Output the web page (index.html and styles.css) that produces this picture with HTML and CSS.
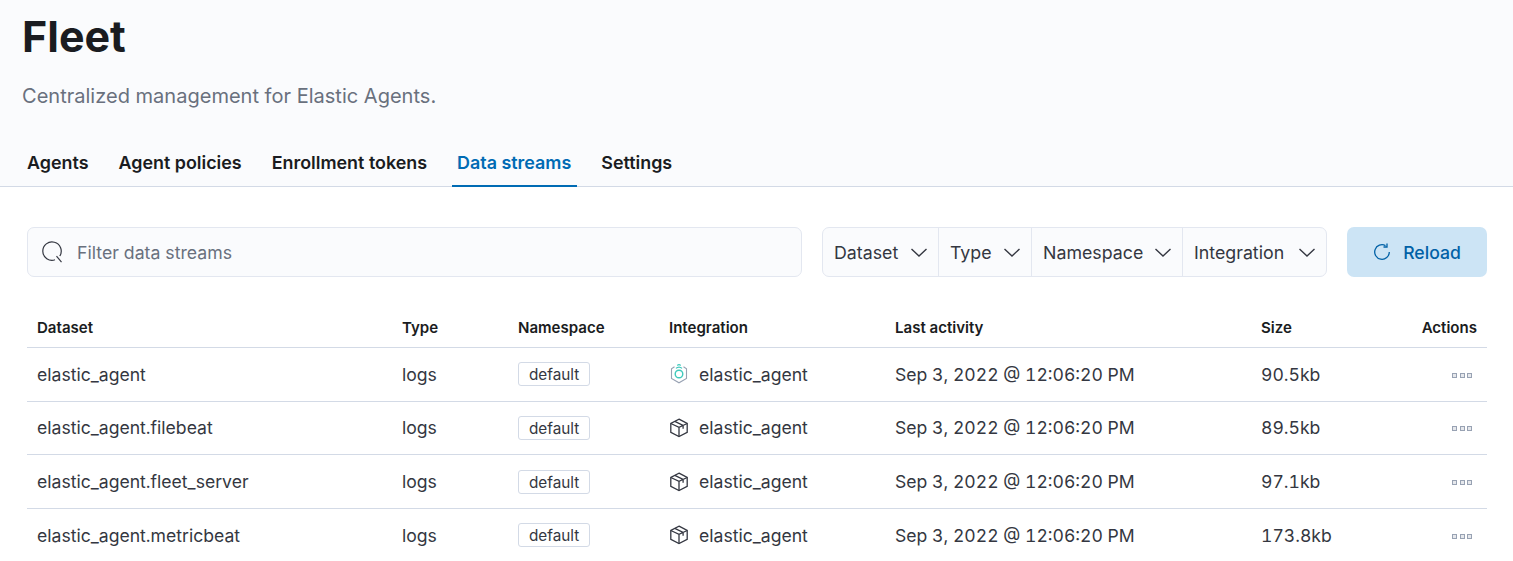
FILE: index.html
```html
<!DOCTYPE html>
<html lang="en">

<head>
    <meta charset="UTF-8">
    <title>Fleet - Data streams</title>
    <link rel="stylesheet" href="styles.css">
</head>

<body>

    <header class="page-header">
        <h1>Fleet</h1>
        <p class="subtitle">Centralized management for Elastic Agents.</p>
        <nav class="tabs">
            <a class="tab">Agents</a>
            <a class="tab">Agent policies</a>
            <a class="tab">Enrollment tokens</a>
            <a class="tab tab-active">Data streams</a>
            <a class="tab">Settings</a>
        </nav>
    </header>

    <main class="content">
        <div class="toolbar">
            <div class="search">
                <svg class="search-icon" width="22" height="22" viewBox="0 0 22 22" fill="none" stroke="#343741" stroke-width="1.2">
                    <path d="M13 18.800A9.200 9.200 0 1 1 17.800 15"/>
                    <path d="M14.500 15.200l5 6"/>
                </svg>
                <span class="search-text">Filter data streams</span>
            </div>
            <div class="filters">
                <button class="filter">Dataset <svg class="chevron" width="16" height="9" viewBox="0 0 16 9" fill="none" stroke="#343741" stroke-width="1.4"><path d="M.5 1L8 8l7.500-7"/></svg></button>
                <button class="filter">Type <svg class="chevron" width="16" height="9" viewBox="0 0 16 9" fill="none" stroke="#343741" stroke-width="1.4"><path d="M.5 1L8 8l7.500-7"/></svg></button>
                <button class="filter">Namespace <svg class="chevron" width="16" height="9" viewBox="0 0 16 9" fill="none" stroke="#343741" stroke-width="1.4"><path d="M.5 1L8 8l7.500-7"/></svg></button>
                <button class="filter">Integration <svg class="chevron" width="16" height="9" viewBox="0 0 16 9" fill="none" stroke="#343741" stroke-width="1.4"><path d="M.5 1L8 8l7.500-7"/></svg></button>
            </div>
            <button class="reload">
                <svg width="18" height="18" viewBox="0 0 18 18" fill="none" stroke="#0061a6" stroke-width="1.3">
                    <path d="M12.500 2.600A7.300 7.300 0 1 0 16.300 9"/>
                    <path d="M14 .5v3.500h-3.500"/>
                </svg>
                Reload
            </button>
        </div>

        <table class="streams">
            <thead>
                <tr>
                    <th class="col-dataset">Dataset</th>
                    <th class="col-type">Type</th>
                    <th class="col-ns">Namespace</th>
                    <th class="col-int">Integration</th>
                    <th class="col-last">Last activity</th>
                    <th class="col-size">Size</th>
                    <th class="col-actions">Actions</th>
                </tr>
            </thead>
            <tbody>
                <tr>
                    <td>elastic_agent</td>
                    <td>logs</td>
                    <td><span class="badge">default</span></td>
                    <td><span class="integration">
                        <svg width="20" height="20" viewBox="0 0 20 20" fill="none">
                            <path d="M5.500 2.800L2.500 4.800v9.700l7.500 4.300 7.500-4.300V4.800l-3-2" stroke="#98a2b3" stroke-width="1.100"/>
                            <circle cx="10" cy="10" r="3.800" stroke="#3fc9bd" stroke-width="1.400"/>
                            <path d="M7 4.400a4 4 0 0 1 6 0M8.300 1.500a2.500 2.500 0 0 1 3.400 0" stroke="#3fc9bd" stroke-width="1.200"/>
                        </svg>
                        elastic_agent</span></td>
                    <td>Sep 3, 2022 @ 12:06:20 PM</td>
                    <td>90.5kb</td>
                    <td><span class="dots"><i></i><i></i><i></i></span></td>
                </tr>
                <tr>
                    <td>elastic_agent.filebeat</td>
                    <td>logs</td>
                    <td><span class="badge">default</span></td>
                    <td><span class="integration">
                        <svg width="20" height="20" viewBox="0 0 20 20" fill="none" stroke="#343741" stroke-width="1.300">
                            <path d="M10 1.200l8.200 4.300v8.800L10 18.600l-8.200-4.300V5.500z"/>
                            <path d="M1.800 5.500l8.200 3.900 8.200-3.900M10 9.400v9.200M5.800 3.400l8.300 4.100v3.200"/>
                        </svg>
                        elastic_agent</span></td>
                    <td>Sep 3, 2022 @ 12:06:20 PM</td>
                    <td>89.5kb</td>
                    <td><span class="dots"><i></i><i></i><i></i></span></td>
                </tr>
                <tr>
                    <td>elastic_agent.fleet_server</td>
                    <td>logs</td>
                    <td><span class="badge">default</span></td>
                    <td><span class="integration">
                        <svg width="20" height="20" viewBox="0 0 20 20" fill="none" stroke="#343741" stroke-width="1.300">
                            <path d="M10 1.200l8.200 4.300v8.800L10 18.600l-8.200-4.300V5.500z"/>
                            <path d="M1.800 5.500l8.200 3.900 8.200-3.900M10 9.400v9.200M5.800 3.400l8.300 4.100v3.200"/>
                        </svg>
                        elastic_agent</span></td>
                    <td>Sep 3, 2022 @ 12:06:20 PM</td>
                    <td>97.1kb</td>
                    <td><span class="dots"><i></i><i></i><i></i></span></td>
                </tr>
                <tr>
                    <td>elastic_agent.metricbeat</td>
                    <td>logs</td>
                    <td><span class="badge">default</span></td>
                    <td><span class="integration">
                        <svg width="20" height="20" viewBox="0 0 20 20" fill="none" stroke="#343741" stroke-width="1.300">
                            <path d="M10 1.200l8.200 4.300v8.800L10 18.600l-8.200-4.300V5.500z"/>
                            <path d="M1.800 5.500l8.200 3.900 8.200-3.900M10 9.400v9.200M5.800 3.400l8.300 4.100v3.200"/>
                        </svg>
                        elastic_agent</span></td>
                    <td>Sep 3, 2022 @ 12:06:20 PM</td>
                    <td>173.8kb</td>
                    <td><span class="dots"><i></i><i></i><i></i></span></td>
                </tr>
            </tbody>
        </table>
    </main>

</body>

</html>
```

FILE: styles.css
```css
html, body {
    height: 561px;
    overflow: hidden;
}

body {
    font-family: Inter, "Liberation Sans", sans-serif;
    font-size: 17.6px;
    color: #343741;
    background-color: #fff;
    margin: 0;
}

.page-header {
    background-color: #fafbfd;
    border-bottom: 1px solid #d3dae6;
    height: 186px;
    padding: 0 22px;
}

h1 {
    margin: 0;
    padding-top: 10px;
    font-size: 43px;
    line-height: 52px;
    font-weight: 700;
    color: #1a1c21;
}

.subtitle {
    margin: 21px 0 0;
    font-size: 20.05px;
    line-height: 26px;
    color: #69707d;
}

.tabs {
    display: flex;
    margin: 29px 0 0 -.5px;
}

.tab {
    padding: 0 5.5px;
    margin-right: 19px;
    height: 49px;
    line-height: 50px;
    font-size: 17.9px;
    font-weight: 600;
    color: #1a1c21;
    box-sizing: border-box;
}

.tab-active {
    color: #006bb4;
    border-bottom: 2px solid #006bb4;
}

.content {
    padding: 40px 26px 0 27px;
}

.toolbar {
    display: flex;
    gap: 20px;
}

.search {
    flex: 1;
    display: flex;
    align-items: center;
    height: 50px;
    padding-left: 14px;
    gap: 13px;
    background-color: #fafbfd;
    border: 1px solid #e3e7f0;
    border-radius: 7px;
    box-sizing: border-box;
}

.search-text {
    font-size: 17.7px;
    color: #69707d;
}

.filters {
    display: flex;
    width: 505px;
    height: 50px;
    background-color: #fafbfd;
    border: 1px solid #e3e7f0;
    border-radius: 7px;
    box-sizing: border-box;
}

.filter {
    display: flex;
    align-items: center;
    justify-content: space-between;
    flex: none;
    padding: 0 11px;
    background: none;
    border: none;
    border-left: 1px solid #e3e7f0;
    font-family: inherit;
    font-size: 17.8px;
    color: #343741;
}

.filter:nth-child(1) { width: 115px; border-left: none; }
.filter:nth-child(2) { width: 93px; }
.filter:nth-child(3) { width: 151px; }
.filter:nth-child(4) { width: 144px; }

.reload {
    display: flex;
    align-items: center;
    justify-content: center;
    gap: 12px;
    width: 140px;
    height: 50px;
    background-color: #cce4f5;
    border: none;
    border-radius: 7px;
    font-family: inherit;
    font-size: 17.6px;
    font-weight: 500;
    color: #0061a6;
}

.streams {
    width: 100%;
    margin-top: 30px;
    border-collapse: collapse;
    table-layout: fixed;
}

.streams th,
.streams td {
    box-sizing: border-box;
    padding: 0 10px;
    border-bottom: 1px solid #d3dae6;
}

.streams th {
    height: 40.4px;
    padding-top: 1px;
    text-align: left;
    font-size: 15.05px;
    font-weight: 600;
    color: #1a1c21;
}

.streams td {
    height: 53.67px;
    font-variant-numeric: tabular-nums;
}

.col-dataset { width: 365px; }
.col-type { width: 116px; }
.col-ns { width: 151px; }
.col-int { width: 226px; }
.col-last { width: 366px; }
.col-size { width: 100px; }

.streams th.col-actions {
    text-align: right;
}

.badge {
    display: inline-block;
    padding: 0 10px;
    height: 24px;
    line-height: 23px;
    font-size: 15.3px;
    background-color: #fff;
    border: 1px solid #d3dae6;
    border-radius: 3px;
    box-sizing: border-box;
}

.integration {
    display: flex;
    align-items: center;
    gap: 10px;
}

.dots {
    display: flex;
    justify-content: flex-end;
    gap: 2.5px;
    margin: 2px 5px 0 0;
}

.dots i {
    width: 5px;
    height: 5px;
    background-color: #e6e8ec;
    border: 1px solid #98a2b3;
    box-sizing: border-box;
}
```
